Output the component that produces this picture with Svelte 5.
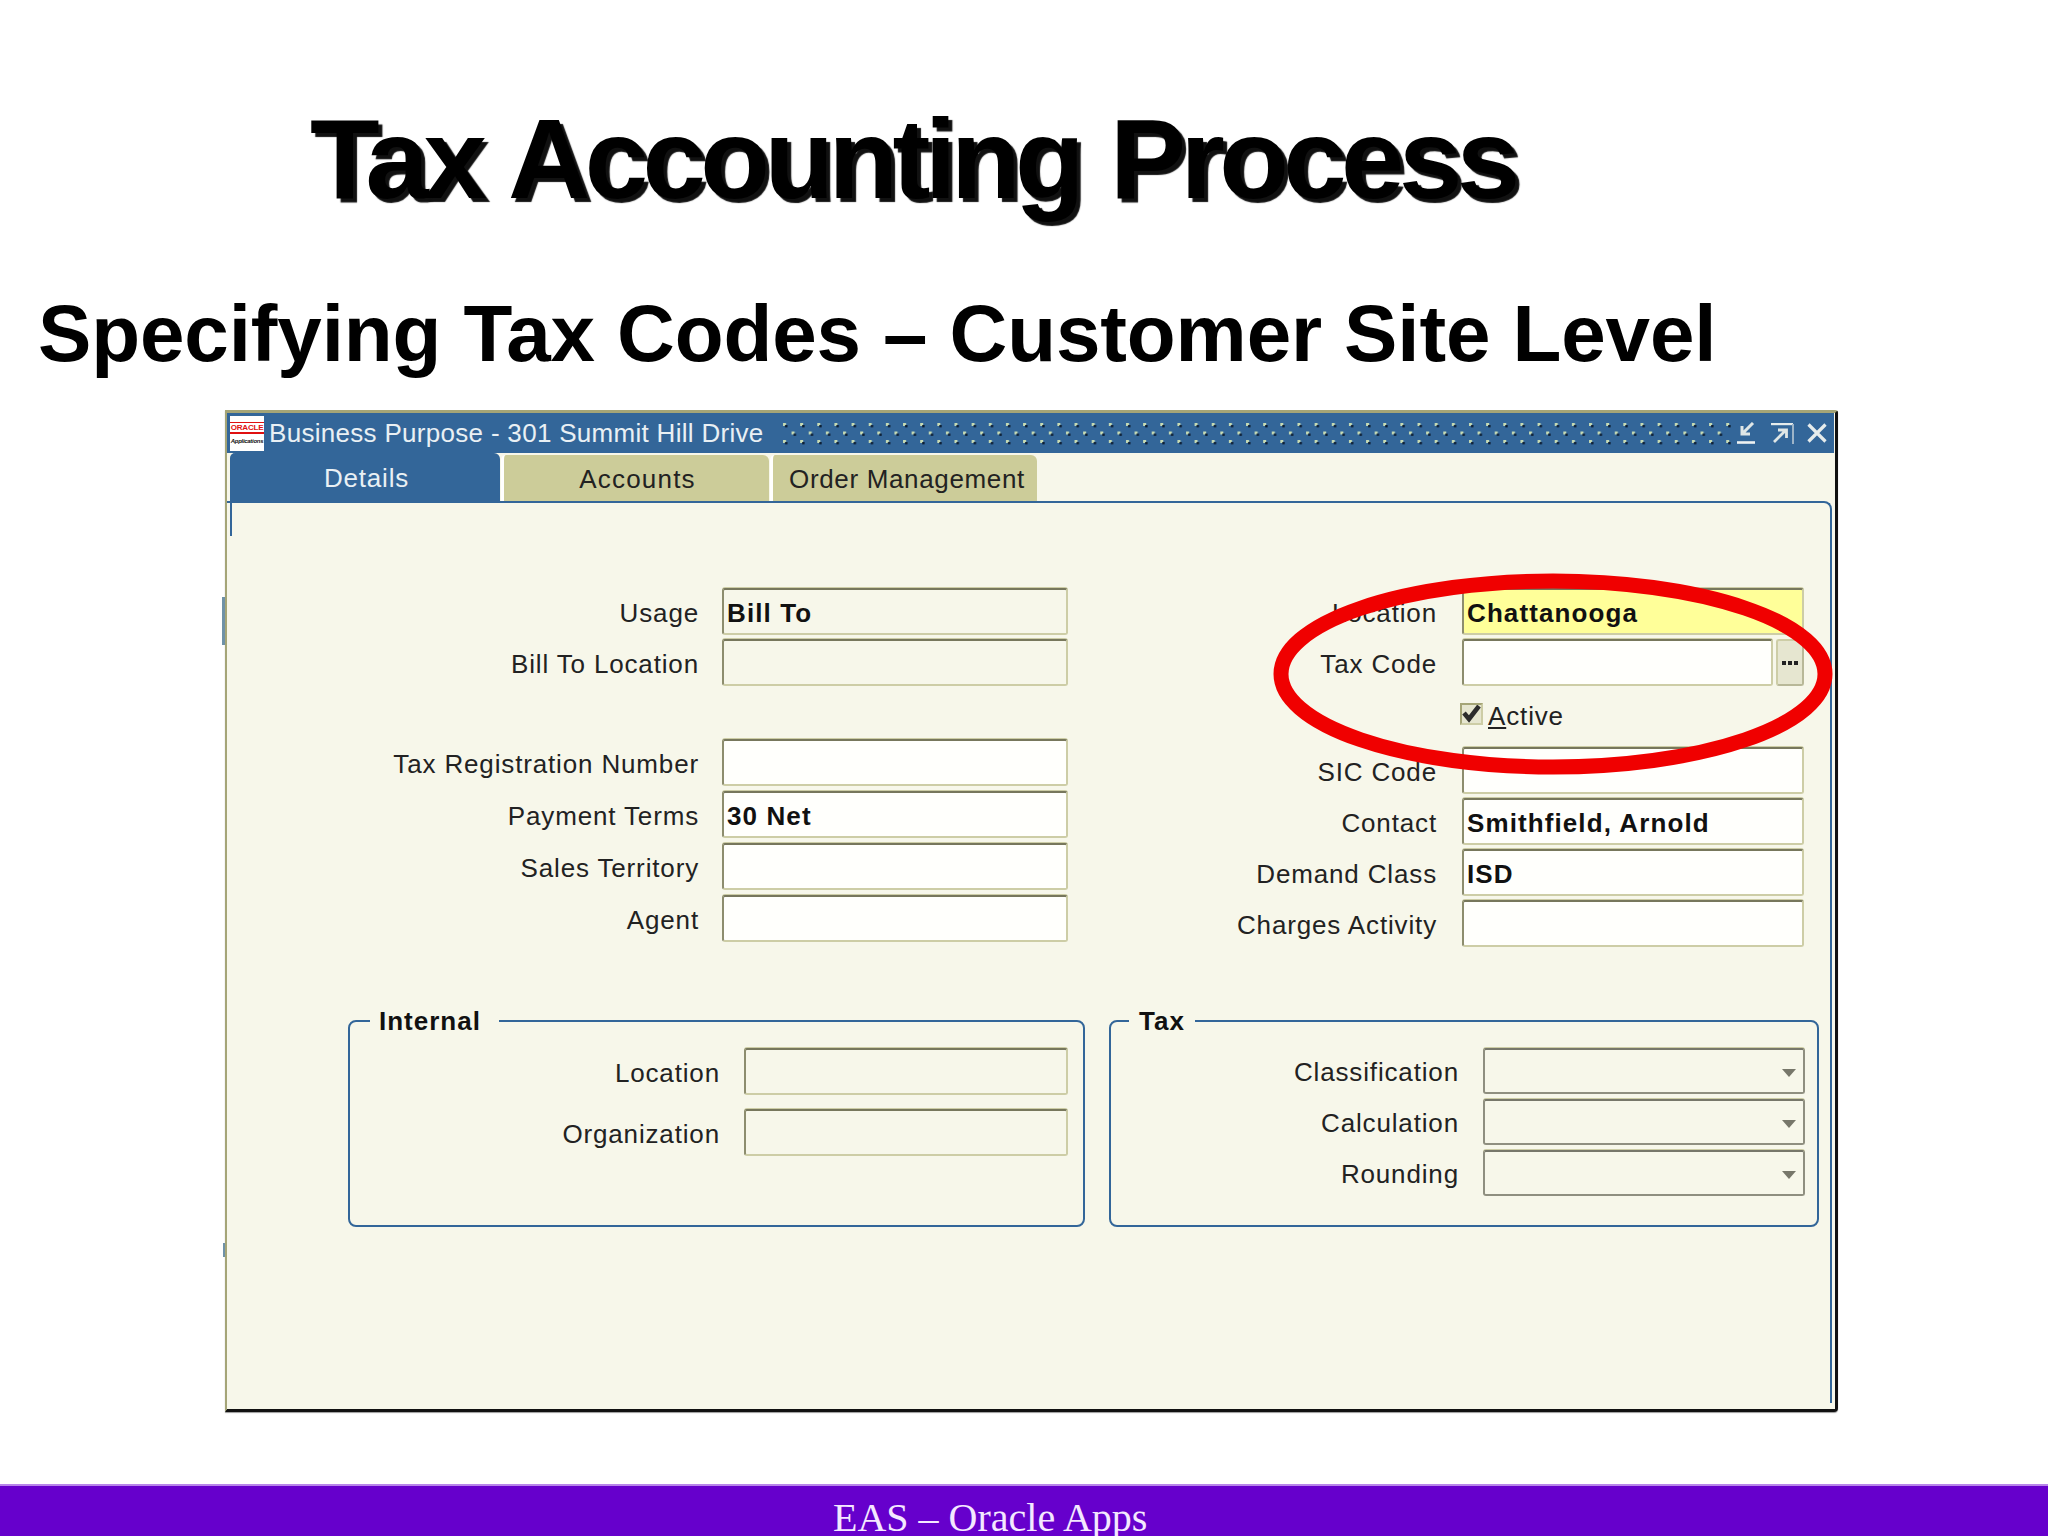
<script lang="ts">
  const contactRows = [
    { label: "SIC Code", value: "" },
    { label: "Contact", value: "Smithfield, Arnold" },
    { label: "Demand Class", value: "ISD" },
    { label: "Charges Activity", value: "" },
  ];
  const billingRows = [
    { label: "Tax Registration Number", value: "" },
    { label: "Payment Terms", value: "30 Net" },
    { label: "Sales Territory", value: "" },
    { label: "Agent", value: "" },
  ];
  const taxRows = ["Classification", "Calculation", "Rounding"];
</script>

<div class="page">
  <header class="heading">
    <h1>Tax Accounting Process</h1>
    <h2>Specifying Tax Codes – Customer Site Level</h2>
  </header>

  <section class="window">
    <div class="titlebar">
      <div class="logo">
        <span class="logo-red">ORACLE</span>
        <span class="logo-sub">Applications</span>
      </div>
      <span class="title-text">Business Purpose - 301 Summit Hill Drive</span>
      <svg class="dots" aria-hidden="true">
        <defs>
          <pattern id="dotgrid" width="17.15" height="17" patternUnits="userSpaceOnUse">
            <rect x="1" y="2" width="3" height="3" fill="#c8dcb4" />
            <rect x="3" y="4" width="2.4" height="2.4" fill="#0c1e34" />
            <rect x="9.6" y="10.5" width="3" height="3" fill="#c8dcb4" />
            <rect x="11.6" y="12.5" width="2.4" height="2.4" fill="#0c1e34" />
          </pattern>
        </defs>
        <rect width="100%" height="100%" fill="url(#dotgrid)" />
      </svg>
      <div class="win-buttons">
        <svg class="min-btn" width="18" height="22" viewBox="0 0 18 22" aria-hidden="true">
          <path d="M16 1 L6 11 M5 4 V12 H13" fill="none" stroke="#dfe6e6" stroke-width="3" />
          <path d="M0 20.5 H18" stroke="#eef2f2" stroke-width="2.6" />
        </svg>
        <svg width="23" height="21" viewBox="0 0 23 21" aria-hidden="true">
          <path d="M0 1 H22" fill="none" stroke="#e6ecec" stroke-width="2.4" />
          <path d="M22 1 V21" fill="none" stroke="#9db4c8" stroke-width="2" />
          <path d="M3 19 L14 8 M7 7 H15.5 V15" fill="none" stroke="#dfe6e6" stroke-width="2.8" />
        </svg>
        <svg width="20" height="20" viewBox="0 0 20 20" aria-hidden="true">
          <path d="M1.5 1.5 L18.5 18.5 M18.5 1.5 L1.5 18.5" stroke="#e6ecec" stroke-width="3.2" />
        </svg>
      </div>
    </div>

    <nav class="tabs">
      <div class="tab active">Details</div>
      <div class="tab accounts">Accounts</div>
      <div class="tab orders">Order Management</div>
    </nav>

    <div class="pane">
      <div class="columns">
        <div class="col left">
          <div class="row"><span class="label">Usage</span><div class="field readonly">Bill To</div></div>
          <div class="row"><span class="label">Bill To Location</span><div class="field readonly"></div></div>
          <div class="spacer"></div>
          {#each billingRows as r}
            <div class="row"><span class="label">{r.label}</span><div class="field">{r.value}</div></div>
          {/each}
        </div>
        <div class="col right">
          <div class="row"><span class="label">Location</span><div class="field required">Chattanooga</div></div>
          <div class="row">
            <span class="label">Tax Code</span>
            <div class="lov">
              <div class="field"></div>
              <div class="lov-btn">
                <svg width="16" height="4" viewBox="0 0 16 4" aria-hidden="true">
                  <path d="M0 0h4v4H0z M6 0h4v4H6z M12 0h4v4h-4z" fill="#222" />
                </svg>
              </div>
            </div>
          </div>
          <div class="row check-row">
            <span class="checkbox">
              <svg width="19" height="18" viewBox="0 0 19 18" aria-hidden="true">
                <path d="M2 8 L7 14 L17 1" fill="none" stroke="#2c2c2c" stroke-width="4.6" />
              </svg>
            </span>
            <span class="check-label"><u>A</u>ctive</span>
          </div>
          {#each contactRows as r}
            <div class="row"><span class="label">{r.label}</span><div class="field">{r.value}</div></div>
          {/each}
        </div>
      </div>

      <div class="groups">
        <fieldset class="group internal">
          <legend>Internal</legend>
          <div class="row"><span class="label">Location</span><div class="field readonly"></div></div>
          <div class="row"><span class="label">Organization</span><div class="field readonly"></div></div>
        </fieldset>
        <fieldset class="group tax">
          <legend>Tax</legend>
          {#each taxRows as label}
            <div class="row">
              <span class="label">{label}</span>
              <div class="field select"><span class="caret"></span></div>
            </div>
          {/each}
        </fieldset>
      </div>
    </div>
  </section>

  <svg class="circle" width="560" height="202" viewBox="0 0 560 202" aria-hidden="true">
    <ellipse cx="280" cy="101" rx="272" ry="93" fill="none" stroke="#f00000" stroke-width="15" />
  </svg>

  <footer class="footer">EAS – Oracle Apps</footer>
</div>

<style>
  :global(body) {
    margin: 0;
    background: #fff;
  }

  .page {
    position: relative;
    width: 2048px;
    height: 1536px;
    display: flex;
    flex-direction: column;
    overflow: hidden;
    font-family: "Liberation Sans", Arial, sans-serif;
    color: #000;
  }

  .heading {
    height: 410px;
    flex: none;
  }

  h1 {
    margin: 0;
    padding: 96px 0 0 310px;
    font-size: 114px;
    line-height: 126px;
    font-weight: 700;
    letter-spacing: -5.6px;
    word-spacing: 5px;
    text-shadow: 4px 4px 1px #111;
    white-space: nowrap;
  }

  h2 {
    margin: 0;
    padding: 66px 0 0 38px;
    font-size: 80px;
    line-height: 92px;
    letter-spacing: -0.12px;
    font-weight: 700;
    white-space: nowrap;
  }

  /* the Oracle Forms window */
  .window {
    position: relative;
    flex: none;
    box-sizing: border-box;
    margin-left: 225px;
    width: 1613px;
    height: 1002px;
    display: flex;
    flex-direction: column;
    background: #f7f7ea;
    border-left: 2px solid #a5a577;
    border-right: 3px solid #111;
    border-top: 3px solid #a5a577;
    border-bottom: 3px solid #111;
    border-radius: 0 3px 4px 0;
    box-shadow: 0 1px 1px #999;
  }

  .window::before {
    content: "";
    position: absolute;
    left: -5px;
    top: 184px;
    width: 3px;
    height: 48px;
    background: #6f92a8;
  }

  .window::after {
    content: "";
    position: absolute;
    left: -4px;
    top: 830px;
    width: 2px;
    height: 14px;
    background: #6f92a8;
  }

  .titlebar {
    height: 40px;
    margin-right: 1px;
    flex: none;
    display: flex;
    align-items: center;
    background: #336699;
    color: #e9f0f4;
  }

  .logo {
    width: 34px;
    height: 35px;
    margin-left: 3px;
    flex: none;
    display: flex;
    flex-direction: column;
    align-items: center;
    justify-content: center;
    gap: 3px;
    background: #fff;
    overflow: hidden;
  }

  .logo-red {
    width: 100%;
    color: #e01010;
    border-top: 1px solid #e01010;
    border-bottom: 2px solid #e01010;
    font-size: 8px;
    line-height: 9px;
    font-weight: 700;
    letter-spacing: -0.2px;
    text-align: center;
  }

  .logo-sub {
    font-size: 6px;
    line-height: 8px;
    font-weight: 700;
    font-style: italic;
    letter-spacing: -0.3px;
    color: #111;
    white-space: nowrap;
  }

  .title-text {
    margin-left: 5px;
    font-size: 26px;
    letter-spacing: 0.3px;
    white-space: nowrap;
  }

  .dots {
    flex: 1;
    height: 25px;
    margin-left: 18px;
    min-width: 0;
  }

  .win-buttons {
    display: flex;
    align-items: center;
    gap: 13px;
    margin: 0 7px 0 5px;
  }

  .min-btn {
    margin-right: 3px;
  }

  .tabs {
    height: 48px;
    flex: none;
    display: flex;
    align-items: flex-end;
    gap: 1px;
    padding-left: 3px;
  }

  .tab {
    box-sizing: border-box;
    height: 46px;
    padding-top: 3px;
    display: flex;
    align-items: center;
    justify-content: center;
    font-size: 26px;
    letter-spacing: 0.8px;
    color: #222;
    background: #cccc99;
    border-left: 3px solid #fff;
    border-radius: 5px 6px 0 0;
  }

  .tab.active {
    height: 48px;
    width: 270px;
    background: #336699;
    color: #e9f0f4;
    border-left-color: #336699;
  }

  .tab.accounts {
    width: 268px;
    padding-left: 2px;
    letter-spacing: 1.2px;
  }

  .tab.orders {
    width: 267px;
    padding-left: 4px;
    letter-spacing: 0.65px;
  }

  .pane {
    position: relative;
    flex: 1;
    box-sizing: border-box;
    margin: 0 3px 6px 0;
    padding-top: 85px;
    border-top: 2px solid #336699;
    border-right: 2px solid #336699;
    border-radius: 0 8px 0 0;
  }

  .pane::before {
    content: "";
    position: absolute;
    left: 3px;
    top: -2px;
    width: 2px;
    height: 35px;
    background: #336699;
  }

  .columns {
    display: flex;
    height: 403px;
  }

  .col {
    display: flex;
    flex-direction: column;
    flex: none;
  }

  .col.left {
    width: 841px;
    gap: 4px;
  }

  .col.right {
    width: 736px;
    gap: 4px;
  }

  .spacer {
    height: 45px;
  }

  .col.left .spacer ~ .row {
    margin-bottom: 1px;
  }

  .row {
    display: flex;
    justify-content: flex-end;
    align-items: center;
    height: 47px;
    flex: none;
    gap: 23px;
  }

  .label {
    padding-top: 3px;
    font-size: 26px;
    letter-spacing: 0.85px;
    color: #222;
    white-space: nowrap;
  }

  .field {
    box-sizing: border-box;
    width: 346px;
    height: 47px;
    flex: none;
    padding: 3px 3px 0;
    display: flex;
    align-items: center;
    font-size: 26px;
    font-weight: 700;
    letter-spacing: 1.1px;
    color: #111;
    background: #fffffc;
    border: 2px solid;
    border-color: #77775c #cdcda6 #cdcda6 #8d8d6e;
    border-radius: 3px;
    box-shadow: 0 -1px 0 #cdcda6;
  }

  .field.readonly {
    background: #f7f7ea;
  }

  .field.required {
    background: #ffff99;
  }

  .col.right .field {
    width: 342px;
  }

  .col.right .row {
    gap: 25px;
  }

  .lov {
    display: flex;
    gap: 3px;
  }

  .col.right .lov .field {
    width: 311px;
  }

  .lov-btn {
    box-sizing: border-box;
    width: 28px;
    height: 47px;
    display: flex;
    align-items: center;
    justify-content: center;
    background: #e6e6d0;
    border: 2px solid;
    border-color: #cdcda6 #b8b898 #b8b898 #cdcda6;
    border-radius: 3px;
  }

  .col.right .check-row {
    box-sizing: border-box;
    height: 53px;
    justify-content: flex-start;
    align-items: flex-start;
    gap: 5px;
    padding-left: 392px;
    padding-top: 13px;
  }

  .checkbox {
    box-sizing: border-box;
    width: 23px;
    height: 22px;
    display: flex;
    align-items: center;
    justify-content: center;
    overflow: hidden;
    background: #e6e6d0;
    border: 2px solid;
    border-color: #a5a577 #cdcda6 #cdcda6 #a5a577;
  }

  .check-label {
    font-size: 26px;
    letter-spacing: 0.85px;
    line-height: 26px;
    color: #222;
  }

  /* the two boxed groups along the bottom */
  .groups {
    display: flex;
    gap: 24px;
    padding-left: 121px;
    margin-top: 15px;
  }

  .group {
    box-sizing: border-box;
    margin: 0;
    padding: 12px 15px 0 0;
    min-width: 0;
    height: 221px;
    flex: none;
    display: flex;
    flex-direction: column;
    border: 2px solid #336699;
    border-radius: 8px;
  }

  .group legend {
    margin-left: 20px;
    padding: 0 18px 0 9px;
    font-size: 26px;
    line-height: 30px;
    font-weight: 700;
    letter-spacing: 1px;
    color: #111;
  }

  .group.internal {
    width: 737px;
    gap: 14px;
  }

  .group.tax {
    width: 710px;
    gap: 5px;
    padding-right: 12px;
  }

  .group.tax legend {
    margin-left: 18px;
    padding: 0 10px 0 10px;
  }

  .group .row {
    gap: 24px;
  }

  .group .field {
    width: 324px;
  }

  .group.tax .row {
    height: 46px;
  }

  .field.select {
    width: 322px;
    height: 46px;
    background: #f7f7ea;
    border-color: #77776a #8f8f80 #8f8f80 #8f8f80;
    justify-content: flex-end;
    padding-right: 7px;
  }

  .caret {
    width: 0;
    height: 0;
    border-left: 7px solid transparent;
    border-right: 7px solid transparent;
    border-top: 8px solid #77776a;
  }

  /* red marker drawn over the window */
  .circle {
    position: absolute;
    left: 1273px;
    top: 573px;
  }

  .footer {
    box-sizing: border-box;
    margin-top: auto;
    height: 52px;
    flex: none;
    padding-left: 833px;
    background: #6600cc;
    border-top: 2px solid #b884ea;
    color: #f4e8ff;
    font-family: "Liberation Serif", "Times New Roman", serif;
    font-size: 40px;
    line-height: 64px;
    white-space: nowrap;
    overflow: hidden;
  }
</style>
